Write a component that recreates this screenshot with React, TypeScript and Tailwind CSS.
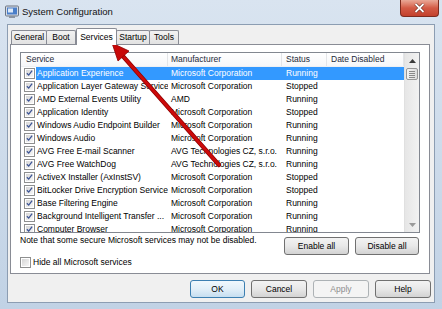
import React from "react";

type Row = { name: string; maker: string; status: string };

const rows: Row[] = [
  { name: "Application Experience", maker: "Microsoft Corporation", status: "Running" },
  { name: "Application Layer Gateway Service", maker: "Microsoft Corporation", status: "Stopped" },
  { name: "AMD External Events Utility", maker: "AMD", status: "Running" },
  { name: "Application Identity", maker: "Microsoft Corporation", status: "Stopped" },
  { name: "Windows Audio Endpoint Builder", maker: "Microsoft Corporation", status: "Running" },
  { name: "Windows Audio", maker: "Microsoft Corporation", status: "Running" },
  { name: "AVG Free E-mail Scanner", maker: "AVG Technologies CZ, s.r.o.", status: "Running" },
  { name: "AVG Free WatchDog", maker: "AVG Technologies CZ, s.r.o.", status: "Running" },
  { name: "ActiveX Installer (AxInstSV)", maker: "Microsoft Corporation", status: "Stopped" },
  { name: "BitLocker Drive Encryption Service", maker: "Microsoft Corporation", status: "Stopped" },
  { name: "Base Filtering Engine", maker: "Microsoft Corporation", status: "Running" },
  { name: "Background Intelligent Transfer ...", maker: "Microsoft Corporation", status: "Running" },
  { name: "Computer Browser", maker: "Microsoft Corporation", status: "Running" },
];

const tabs = [
  { label: "General", w: "w-[36px]" },
  { label: "Boot", w: "w-[30px]" },
  { label: "Services", w: "w-[41px]", active: true },
  { label: "Startup", w: "w-[34px]" },
  { label: "Tools", w: "w-[30px]" },
];

const Check = ({ checked }: { checked: boolean }) => (
  <div className="w-[11px] h-[11px] border border-[#8e8f8f] bg-white p-px">
    <div className="w-full h-full bg-gradient-to-br from-[#d6d6d6] to-[#f7f7f7] flex items-center justify-center">
      {checked && (
        <svg width="8" height="8" viewBox="0 0 8 8">
          <path d="M1 4.2 L3.1 6.4 L7 1.2" fill="none" stroke="#3d5596" strokeWidth="1.5" />
        </svg>
      )}
    </div>
  </div>
);

const Btn = ({ label, w, kind }: { label: string; w: string; kind?: "default" | "disabled" }) => {
  if (kind === "default")
    return (
      <div className={`${w} h-[18px] rounded-[3px] border border-[#3c7fb1] bg-gradient-to-b from-[#f0f8fd] via-[#e2eff8] to-[#c6def0] flex items-center justify-center text-black`}>
        {label}
      </div>
    );
  if (kind === "disabled")
    return (
      <div className={`${w} h-[18px] rounded-[3px] border border-[#adb2b5] bg-[#f4f4f4] flex items-center justify-center text-[#8d8d8d]`}>
        {label}
      </div>
    );
  return (
    <div className={`${w} h-[18px] rounded-[3px] border border-[#707070] bg-gradient-to-b from-[#f3f3f3] via-[#e8e8e8] to-[#d3d3d3] flex items-center justify-center text-black`}>
      {label}
    </div>
  );
};

export default function App() {
  return (
    <div className="relative w-[442px] h-[309px] overflow-hidden bg-gradient-to-b from-[#d9e4f0] to-[#c1d2e5] font-['Liberation_Sans',Arial,sans-serif] text-[8.5px] text-black">
      {/* title bar */}
      <div className="flex h-[24px] items-start">
        <div className="flex items-center gap-[3px] pl-[5px] pt-[5px]">
          <svg width="14" height="14" viewBox="0 0 14 14">
            <rect x="0.5" y="1" width="13" height="10" rx="1" fill="#d8dde4" stroke="#6b7583" />
            <rect x="2" y="2.5" width="10" height="7" fill="#4a7fc9" />
            <rect x="3" y="3.5" width="5" height="4" fill="#dce9f8" />
            <rect x="4" y="11" width="6" height="2" fill="#8a94a1" />
          </svg>
          <span className="text-[9.5px] text-[#111]">System Configuration</span>
        </div>
        <div className="ml-auto mr-[3px] w-[39px] h-[17px] rounded-b-[4px] border border-t-0 border-[#7e2b1e] bg-gradient-to-b from-[#e9a897] via-[#d35a45] to-[#c3412c] flex items-center justify-center">
          <svg width="11" height="10" viewBox="0 0 11 10">
            <path d="M1.5 1 L9.5 9 M9.5 1 L1.5 9" stroke="#5a1a10" strokeWidth="3" />
            <path d="M1.5 1 L9.5 9 M9.5 1 L1.5 9" stroke="#fff" strokeWidth="1.8" />
          </svg>
        </div>
      </div>

      {/* client area */}
      <div className="mx-[7px] h-[279px] border border-[#8c9db2] bg-[#f0f0f0] flex flex-col">
        <div className="flex items-end h-[19px] pl-[3px] relative z-10">
          {tabs.map((t) =>
            t.active ? (
              <div key={t.label} className={`${t.w} h-[17px] -mb-px border border-b-0 border-[#898c95] bg-white rounded-t-[2px] flex items-start justify-center pt-[2px]`}>
                {t.label}
              </div>
            ) : (
              <div key={t.label} className={`${t.w} h-[14px] border border-b-0 border-[#898c95] bg-gradient-to-b from-[#f2f2f2] to-[#e2e2e2] rounded-t-[2px] flex items-center justify-center -ml-px first:ml-0`}>
                {t.label}
              </div>
            )
          )}
        </div>

        {/* tab panel */}
        <div className="ml-[2px] w-[420px] h-[230px] border border-[#898c95] bg-white flex flex-col pl-[9px] pt-[7px]">
          <div className="w-[400px] h-[181px] border border-[#828790] flex overflow-hidden">
            <div className="flex-1 flex flex-col overflow-hidden">
              <div className="flex h-[15px] items-center text-[#1e2a3a] bg-gradient-to-b from-white to-[#f6f7f9] border-b border-[#eef0f3]">
                <div className="w-[147px] pl-[5px] border-r border-[#e3e5e8] h-full flex items-center">Service</div>
                <div className="w-[114px] pl-[3px] border-r border-[#e3e5e8] h-full flex items-center">Manufacturer</div>
                <div className="w-[45px] pl-[4px] border-r border-[#e3e5e8] h-full flex items-center">Status</div>
                <div className="w-[77px] pl-[4px] border-r border-[#e3e5e8] h-full flex items-center">Date Disabled</div>
              </div>
              {rows.map((r, i) => (
                <div key={r.name} className="flex h-[13px] items-center shrink-0">
                  <div className="w-[15px] pl-[3px] flex items-center">
                    <Check checked />
                  </div>
                  <div className={`flex flex-1 h-full items-center whitespace-nowrap ${i === 0 ? "bg-[#3399ff] text-white" : ""}`}>
                    <div className="w-[132px] pl-px overflow-hidden">{r.name}</div>
                    <div className="w-[114px] pl-[3px] overflow-hidden">{r.maker}</div>
                    <div className="w-[45px] pl-[4px]">{r.status}</div>
                    <div className="w-[77px]"></div>
                  </div>
                </div>
              ))}
            </div>
            {/* scrollbar */}
            <div className="w-[15px] bg-gradient-to-r from-[#e6e6e6] to-[#f2f2f2] border-l border-[#e0e0e0] flex flex-col items-center">
              <div className="h-[15px] flex items-center justify-center">
                <svg width="7" height="4" viewBox="0 0 7 4"><path d="M0 4 L3.5 0 L7 4Z" fill="#3a3a3a" /></svg>
              </div>
              <div className="w-[12px] h-[12px] rounded-[2px] border border-[#979797] bg-gradient-to-r from-[#f4f4f4] to-[#dcdcdc] flex flex-col items-center justify-center gap-px">
                <div className="w-[6px] h-px bg-[#8a8a8a]" />
                <div className="w-[6px] h-px bg-[#8a8a8a]" />
                <div className="w-[6px] h-px bg-[#8a8a8a]" />
                <div className="w-[6px] h-px bg-[#8a8a8a]" />
              </div>
              <div className="flex-1" />
              <div className="h-[15px] flex items-center justify-center">
                <svg width="7" height="4" viewBox="0 0 7 4"><path d="M0 0 L3.5 4 L7 0Z" fill="#9a9a9a" /></svg>
              </div>
            </div>
          </div>

          <div className="flex mt-[1px] pr-[10px]">
            <div className="leading-[11px] mt-px">Note that some secure Microsoft services may not be disabled.</div>
            <div className="ml-auto flex gap-[6px] mt-[3px]">
              <Btn label="Enable all" w="w-[65px]" />
              <Btn label="Disable all" w="w-[64px]" />
            </div>
          </div>

          <div className="flex items-center gap-[2px] mt-px">
            <Check checked={false} />
            <span>Hide all Microsoft services</span>
          </div>
        </div>

        <div className="flex justify-end gap-[6px] mt-[6px] pr-[3px]">
          <Btn label="OK" w="w-[55px]" kind="default" />
          <Btn label="Cancel" w="w-[56px]" />
          <Btn label="Apply" w="w-[56px]" kind="disabled" />
          <Btn label="Help" w="w-[56px]" />
        </div>
      </div>

      {/* red annotation arrow */}
      <svg className="absolute inset-0 pointer-events-none" width="442" height="309" viewBox="0 0 442 309">
        <line x1="219" y1="165" x2="121" y2="54" stroke="#8e0000" strokeWidth="4.2" strokeLinecap="round" />
        <line x1="219" y1="165" x2="121" y2="54" stroke="#cc0a0a" strokeWidth="2.8" strokeLinecap="round" />
        <path d="M112 43 L129 51 L118 61 Z" fill="#c80808" stroke="#8e0000" strokeWidth="0.8" strokeLinejoin="round" />
      </svg>
    </div>
  );
}
